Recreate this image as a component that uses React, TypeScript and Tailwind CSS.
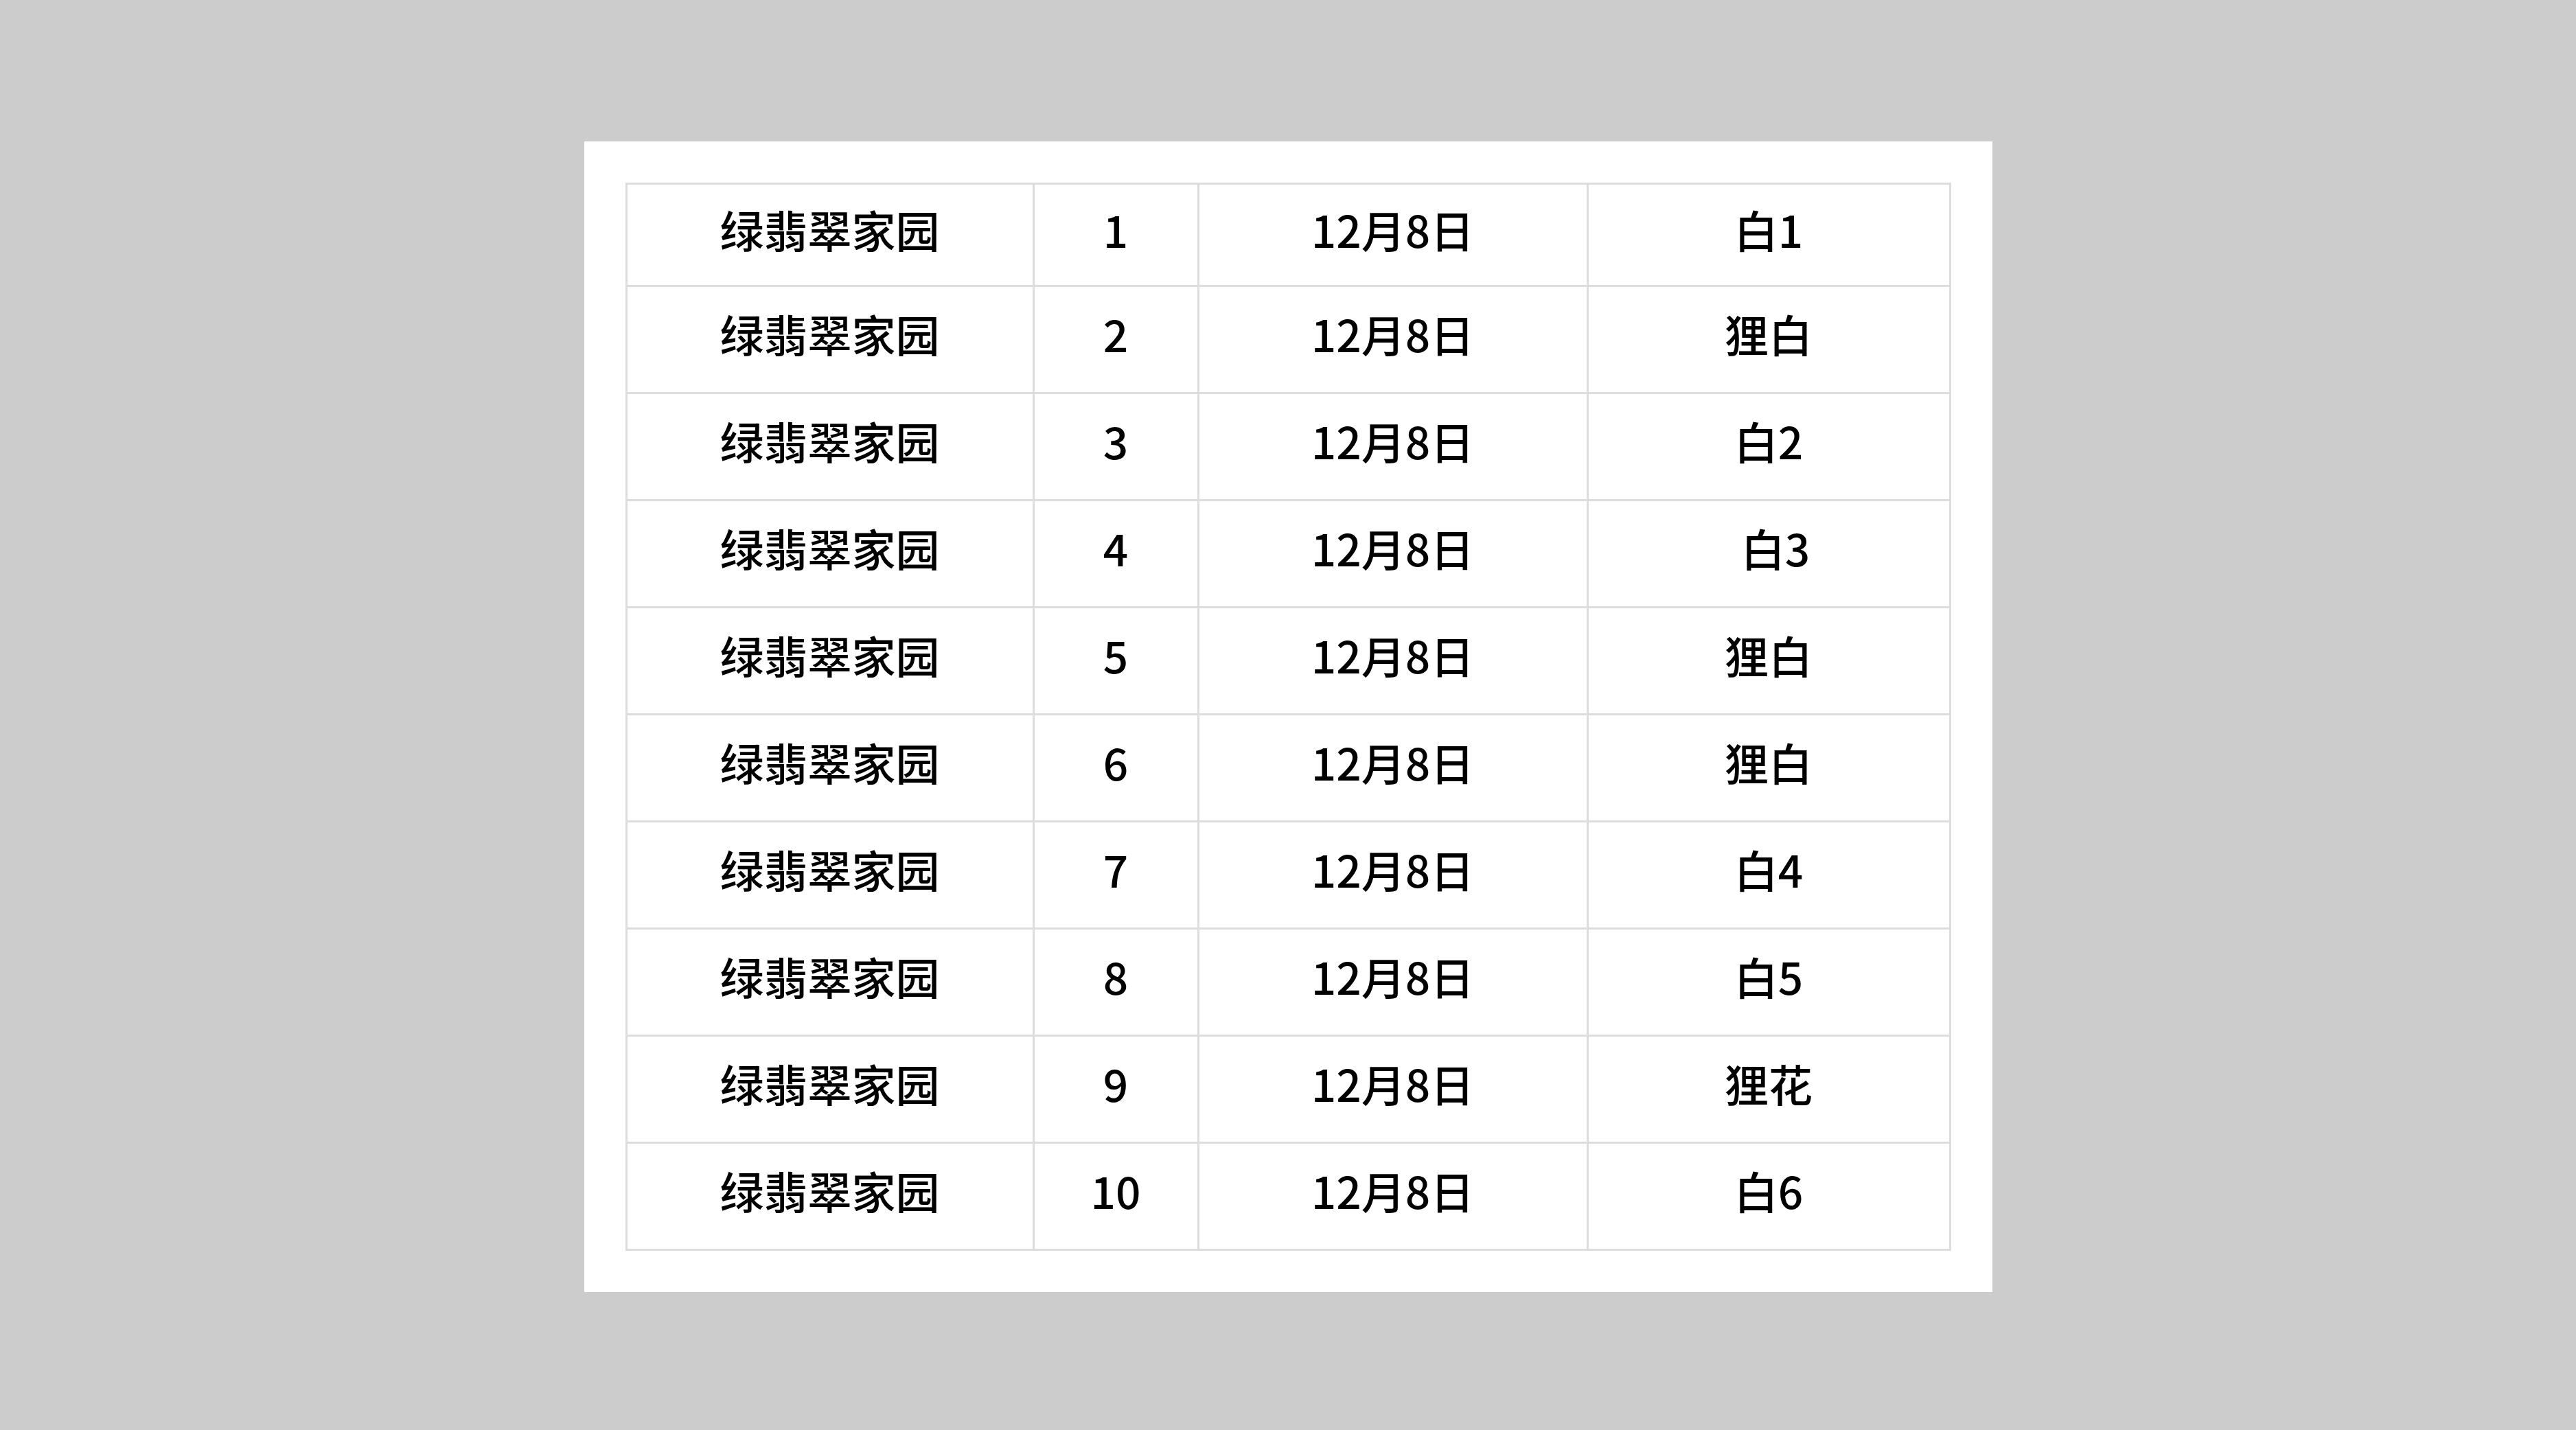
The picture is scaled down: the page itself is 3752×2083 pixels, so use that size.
const rows = [
  { n: "1", cat: "白1" },
  { n: "2", cat: "狸白" },
  { n: "3", cat: "白2" },
  { n: "4", cat: "白3", shift: true },
  { n: "5", cat: "狸白" },
  { n: "6", cat: "狸白" },
  { n: "7", cat: "白4" },
  { n: "8", cat: "白5" },
  { n: "9", cat: "狸花" },
  { n: "10", cat: "白6" },
];

export default function App() {
  return (
    <div
      className="h-screen w-full bg-[#cccccc] flex items-center justify-center"
      style={{ fontFamily: '"Noto Sans CJK SC", "Noto Sans", sans-serif' }}
    >
      <div className="bg-white p-[60px] translate-y-[2px]">
        <table className="table-fixed border-collapse w-[1928px] text-[64px] font-medium text-black leading-none">
          <colgroup>
            <col className="w-[593px]" />
            <col className="w-[240px]" />
            <col className="w-[567px]" />
            <col className="w-[528px]" />
          </colgroup>
          <tbody>
            {rows.map((r, i) => (
              <tr key={r.n} className={i === 0 ? "h-[149px]" : "h-[156px]"}>
                <td className="border-[3px] border-[#dddddd] text-center align-middle pb-[18px]">绿翡翠家园</td>
                <td className="border-[3px] border-[#dddddd] text-center align-middle pb-[18px]">{r.n}</td>
                <td className="border-[3px] border-[#dddddd] text-center align-middle pb-[18px]">12月8日</td>
                <td
                  className={
                    r.shift
                      ? "border-[3px] border-[#dddddd] text-center align-middle pb-[18px] pl-[20px]"
                      : "border-[3px] border-[#dddddd] text-center align-middle pb-[18px]"
                  }
                >
                  {r.cat}
                </td>
              </tr>
            ))}
          </tbody>
        </table>
      </div>
    </div>
  );
}
